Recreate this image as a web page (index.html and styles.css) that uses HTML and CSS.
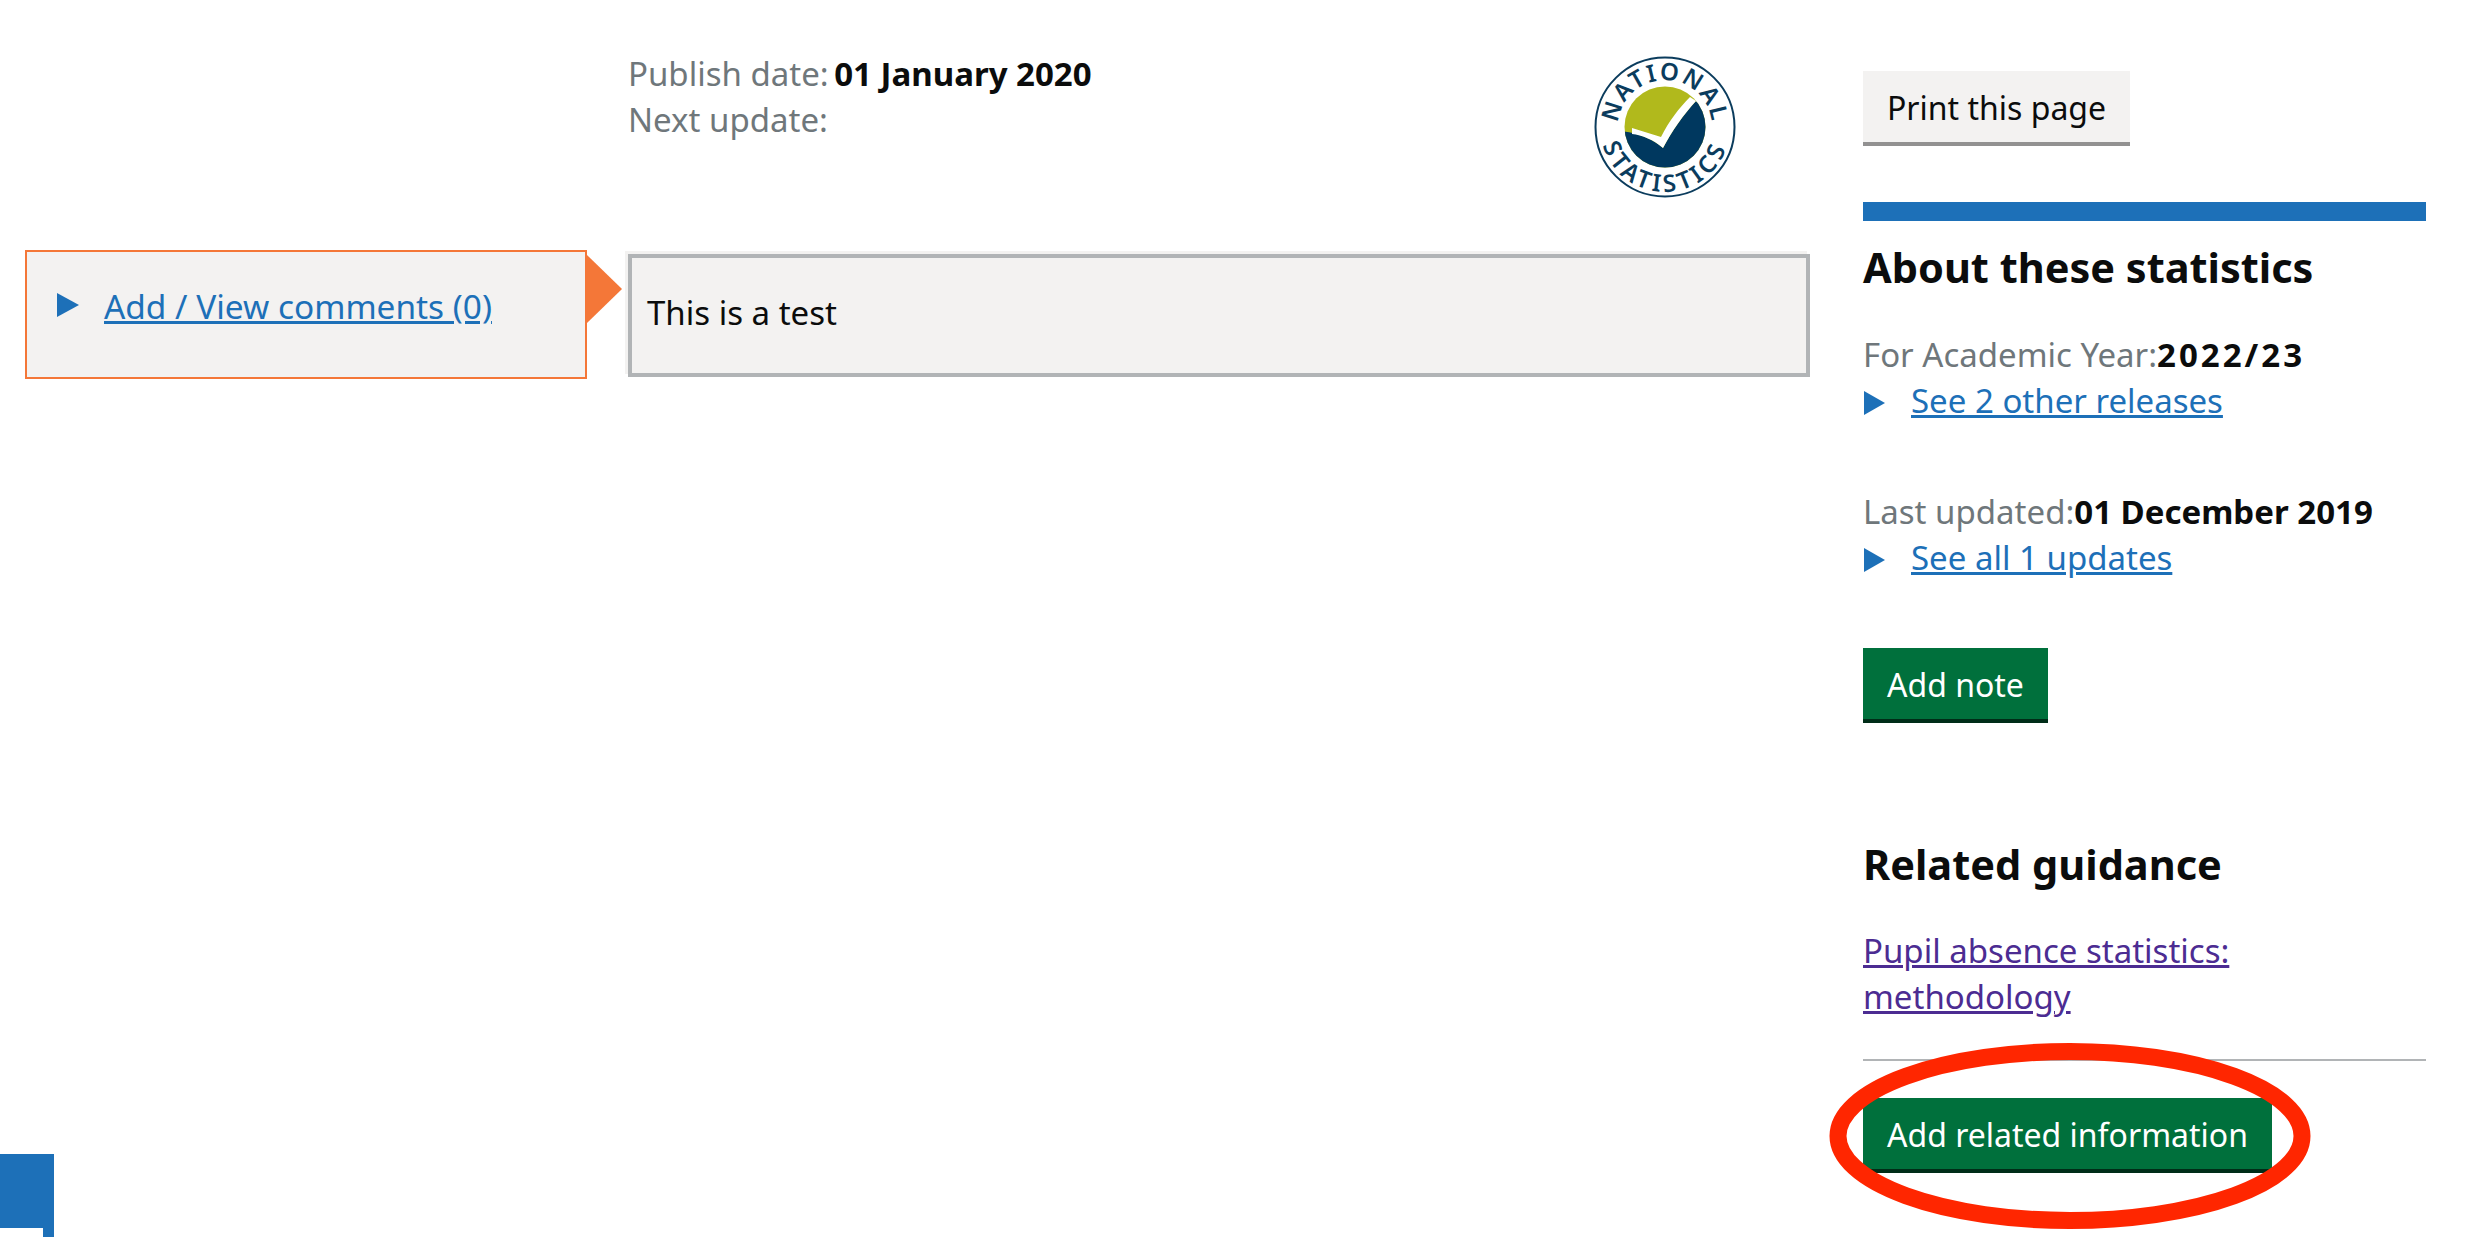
FILE: index.html
```html
<!DOCTYPE html>
<html lang="en">
<head>
    <meta charset="UTF-8">
    <title>Pupil absence statistics</title>
    <link rel="stylesheet" href="styles.css">
</head>
<body>

    <div class="page">
        <div class="comments">
            <div class="comment-box">
                <span class="arrow"></span>
                <a href="#" class="link">Add / View comments (0)</a>
            </div>
        </div>

        <main class="content">
            <div class="meta">
                <p class="meta-text">
                    <span class="grey">Publish date:</span> <b class="date">01 January 2020</b><br>
                    <span class="grey">Next update:</span>
                </p>
                <svg class="logo" viewBox="0 0 142 142" width="142" height="142">
                    <defs>
                        <path id="arcTop" d="M 26.8 87.1 A 47 47 0 1 1 115.2 87.1"></path>
                        <path id="arcBottom" d="M 9.9 48.8 A 65 65 0 1 0 132.1 48.8"></path>
                        <clipPath id="disc"><circle cx="71" cy="71" r="40.5"></circle></clipPath>
                    </defs>
                    <circle cx="71" cy="71" r="69.5" fill="#fff" stroke="#0b3c5d" stroke-width="2"></circle>
                    <g clip-path="url(#disc)">
                        <rect width="142" height="142" fill="#b1b91c"></rect>
                        <path d="M 25 75 C 40 76 58 82 69 92 C 78 75 90 58 102 45 L 125 60 L 125 125 L 20 125 Z" fill="#00385f"></path>
                        <path d="M 38 72 L 67 81 C 75 65 85 52 96 41 L 102 45 C 90 58 78 75 69 92 C 60 84 48 79 38 78 Z" fill="#fff"></path>
                    </g>
                    <text class="logo-text logo-top"><textPath href="#arcTop" startOffset="50%" text-anchor="middle">NATIONAL</textPath></text>
                    <text class="logo-text logo-bottom"><textPath href="#arcBottom" startOffset="50%" text-anchor="middle">STATISTICS</textPath></text>
                </svg>
            </div>
            <div class="release-note">This is a test</div>
        </main>

        <aside class="sidebar">
            <a href="#" class="btn btn-grey">Print this page</a>
            <div class="blue-bar"></div>
            <h2 class="first-title">About these statistics</h2>

            <p class="row first-row"><span class="grey">For Academic Year:</span><b class="year">2022/23</b></p>
            <p class="row"><span class="tri"></span><a href="#" class="link">See 2 other releases</a></p>

            <p class="row next-row"><span class="grey">Last updated:</span><b>01 December 2019</b></p>
            <p class="row"><span class="tri"></span><a href="#" class="link">See all 1 updates</a></p>

            <a href="#" class="btn btn-green note-btn">Add note</a>

            <h2 class="related-title">Related guidance</h2>
            <p class="related-links"><a href="#" class="visited">Pupil absence statistics:<br>methodology</a></p>
            <hr class="rule">
            <a href="#" class="btn btn-green">Add related information</a>
        </aside>
    </div>

    <div class="corner"><span></span></div>

    <svg class="circle-mark" width="482" height="186" viewBox="0 0 482 186">
        <ellipse cx="241" cy="93" rx="232" ry="84.5" fill="none" stroke="#ff2600" stroke-width="17"></ellipse>
    </svg>

</body>
</html>
```

FILE: styles.css
```css
html, body {
    margin: 0;
    height: 100%;
    overflow: hidden;
    background-color: #fff;
}
body {
    font-family: "Noto Sans", sans-serif;
    font-size: 33px;
    line-height: 46px;
    color: #0b0c0c;
    position: relative;
}
p {
    margin: 0;
}
b {
    font-weight: 700;
}
.grey {
    color: #6f777b;
}
.link {
    color: #1d70b8;
    text-decoration: underline;
}
.visited {
    color: #4c2c92;
}
.date {
    margin-left: -3px;
}
.year {
    letter-spacing: 3px;
}
.page {
    display: flex;
    align-items: flex-start;
}
.comments {
    width: 562px;
    margin-left: 25px;
    padding-top: 250px;
}
.comment-box {
    position: relative;
    height: 129px;
    box-sizing: border-box;
    background-color: #f3f2f1;
    border: 2px solid #f47738;
    padding: 31px 0 0 77px;
}
.comment-box .link {
    font-size: 33.4px;
}
.comment-box::before {
    content: "";
    position: absolute;
    left: 30px;
    top: 41px;
    border-left: 22px solid #1d70b8;
    border-top: 12px solid transparent;
    border-bottom: 12px solid transparent;
}
.arrow {
    position: absolute;
    left: 560px;
    top: 3px;
    border-left: 35px solid #f47738;
    border-top: 34px solid transparent;
    border-bottom: 34px solid transparent;
}
.content {
    width: 1182px;
    margin-left: 41px;
    padding-top: 51px;
}
.meta {
    display: flex;
    justify-content: space-between;
    height: 203px;
    padding-right: 74px;
}
.logo {
    margin-top: 5px;
    overflow: visible;
}
.logo-text {
    font-family: "Noto Sans", sans-serif;
    font-size: 24px;
    font-weight: 600;
    fill: #0b3c5d;
}
.logo-top {
    letter-spacing: 2px;
}
.logo-bottom {
    letter-spacing: 4px;
}
.release-note {
    height: 123px;
    box-sizing: border-box;
    background-color: #f3f2f1;
    border: 4px solid #b1b4b6;
    box-shadow: -3px -3px 0 #f3f2f1;
    padding: 32px 15px 0;
}
.sidebar {
    width: 563px;
    margin-left: 53px;
    padding-top: 71px;
}
.btn {
    display: table;
    box-sizing: border-box;
    height: 71px;
    line-height: 69px;
    padding: 2px 24px 0;
    font-size: 32px;
    text-decoration: none;
}
.btn-grey {
    background-color: #f3f2f1;
    color: #0b0c0c;
    box-shadow: 0 4px 0 #929191;
}
.btn-green {
    background-color: #00703c;
    color: #fff;
    box-shadow: 0 4px 0 #002d18;
}
.blue-bar {
    height: 19px;
    margin-top: 60px;
    background-color: #1d70b8;
}
h2 {
    font-size: 41.5px;
    line-height: 50px;
    font-weight: 700;
    margin: 0;
}
.first-title {
    margin-top: 21px;
}
.first-row {
    margin-top: 40px;
}
.next-row {
    margin-top: 65px;
}
.tri {
    display: inline-block;
    border-left: 21px solid #1d70b8;
    border-top: 12px solid transparent;
    border-bottom: 12px solid transparent;
    margin: 0 26px 0 1px;
    vertical-align: -2px;
}
.note-btn {
    margin-top: 67px;
}
.related-title {
    margin-top: 120px;
}
.related-links {
    margin-top: 39px;
}
.rule {
    height: 2px;
    margin: 39px 0 37px;
    border: 0;
    background-color: #b1b4b6;
}
.corner {
    position: absolute;
    left: 0;
    bottom: 0;
    width: 54px;
    height: 83px;
    background-color: #1d70b8;
}
.corner span {
    position: absolute;
    left: 0;
    bottom: 0;
    width: 43px;
    height: 9px;
    background-color: #fff;
}
.circle-mark {
    position: absolute;
    left: 1829px;
    top: 1043px;
}
```
